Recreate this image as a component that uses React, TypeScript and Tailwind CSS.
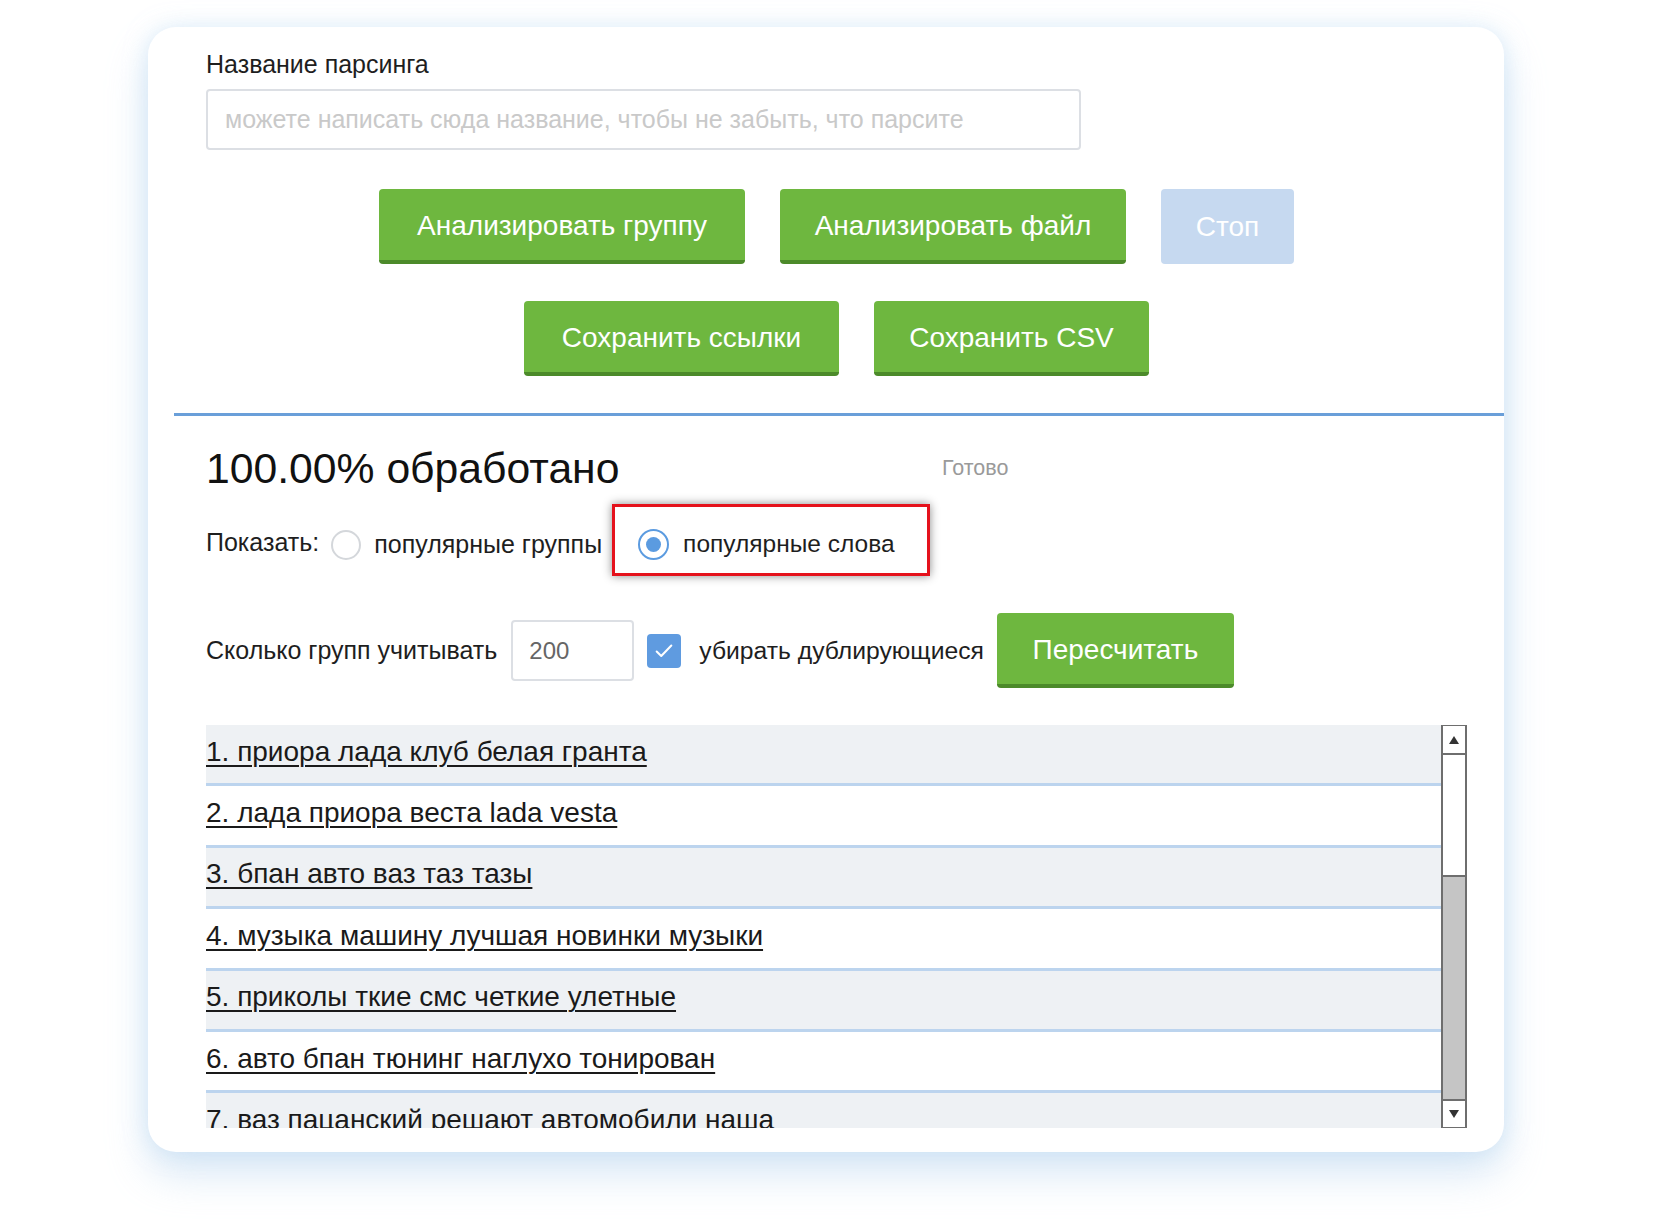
import React from "react";

const rows = [
  "1. приора лада клуб белая гранта",
  "2. лада приора веста lada vesta",
  "3. бпан авто ваз таз тазы",
  "4. музыка машину лучшая новинки музыки",
  "5. приколы ткие смс четкие улетные",
  "6. авто бпан тюнинг наглухо тонирован",
  "7. ваз пацанский решают автомобили наша",
];

function GreenButton({ label, className }: { label: string; className: string }) {
  return (
    <div
      className={
        "h-[75px] flex items-center justify-center rounded-[4px] bg-[#6eb73f] border-b-[4px] border-[#4c8a2a] text-white text-[28px] leading-none pt-[2px] " +
        className
      }
    >
      {label}
    </div>
  );
}

export default function App() {
  return (
    <div
      className="min-h-[1220px] w-[1680px] bg-white pl-[148px] pt-[27px]"
      style={{ fontFamily: '"Liberation Sans", Arial, sans-serif' }}
    >
      <div className="w-[1356px] h-[1125px] rounded-[28px] bg-white shadow-[0_22px_40px_rgba(170,205,235,0.45),0_0_22px_rgba(200,225,245,0.55)] pt-[22px] pl-[58px] pr-[37px] flex flex-col">
        <div className="text-[25px] leading-[30px] text-[#1e1e1e]">Название парсинга</div>
        <div className="mt-[10px] w-[875px] h-[61px] rounded-[4px] border-2 border-[#dcdfe4] flex items-center pl-[17px] text-[25px] text-[#c9c9c9]">
          можете написать сюда название, чтобы не забыть, что парсите
        </div>

        <div className="mt-[39px] flex justify-center gap-[35px]">
          <GreenButton label="Анализировать группу" className="w-[366px]" />
          <GreenButton label="Анализировать файл" className="w-[346px]" />
          <div className="h-[75px] w-[133px] flex items-center justify-center rounded-[4px] bg-[#c6d9f0] text-white text-[28px] leading-none">
            Стоп
          </div>
        </div>
        <div className="mt-[37px] flex justify-center gap-[35px]">
          <GreenButton label="Сохранить ссылки" className="w-[315px]" />
          <GreenButton label="Сохранить CSV" className="w-[275px]" />
        </div>

        <div className="mt-[37px] h-[3px] ml-[-32px] mr-[-37px] bg-[#6a9fd9]" />

        <div className="mt-[27px] h-[50px] flex items-center">
          <div className="text-[42.7px] leading-none text-[#111] w-[736px]">100.00% обработано</div>
          <div className="text-[21.5px] text-[#9a9a9a]">Готово</div>
        </div>

        <div className="mt-[11px] h-[72px] flex items-center text-[25px] text-[#1e1e1e]">
          <div className="flex items-center pt-[9px]">
            <span className="mt-[-4px]">Показать:</span>
            <span className="ml-[12px] w-[30px] h-[30px] rounded-full border-2 border-[#d4d7db] bg-white" />
            <span className="ml-[13px]">популярные группы</span>
          </div>
          <div className="ml-[10px] h-[72px] w-[318px] border-[3px] border-[#e5121c] shadow-[0_0_9px_rgba(0,0,0,0.45)] flex items-center pl-[23px] pt-[9px]">
            <span className="w-[31px] h-[31px] rounded-full border-2 border-[#5b9be0] flex items-center justify-center bg-white">
              <span className="w-[15px] h-[15px] rounded-full bg-[#5b9be0]" />
            </span>
            <span className="ml-[14px] text-[24.5px]">популярные слова</span>
          </div>
        </div>

        <div className="mt-[37px] h-[75px] flex items-center text-[25px] text-[#1e1e1e]">
          <span>Сколько групп учитывать</span>
          <div className="ml-[14px] w-[123px] h-[61px] rounded-[4px] border-2 border-[#dcdfe4] flex items-center pl-[16px] text-[24px] text-[#666]">
            200
          </div>
          <span className="ml-[13px] w-[34px] h-[34px] rounded-[4px] bg-[#5f9be0] flex items-center justify-center">
            <svg width="22" height="22" viewBox="0 0 24 24" fill="none">
              <path d="M4 12.5l5 5L20 6" stroke="white" strokeWidth="2.2" strokeLinecap="round" strokeLinejoin="round" />
            </svg>
          </span>
          <span className="ml-[18px] text-[24.7px]">убирать дублирующиеся</span>
          <GreenButton label="Пересчитать" className="ml-[13px] w-[237px]" />
        </div>

        <div className="mt-[37px] h-[403px] flex overflow-hidden">
          <div className="flex-1 flex flex-col">
            {rows.map((r, i) => (
              <div
                key={i}
                className={
                  "shrink-0 h-[61.4px] border-b-[3px] border-[#bcd4ee] flex items-center pb-[5px] " +
                  (i % 2 === 0 ? "bg-[#eef1f4]" : "bg-white")
                }
              >
                <span className="text-[28px] leading-none text-[#1a1a1a] underline decoration-[2px] underline-offset-[4px]">
                  {r}
                </span>
              </div>
            ))}
          </div>
          <div className="w-[26px] h-[405px] mt-[-1px] border-2 border-[#6e6e6e] flex flex-col bg-white">
            <div className="h-[29px] border-b-2 border-[#6e6e6e] flex items-center justify-center">
              <svg width="12" height="10" viewBox="0 0 12 10">
                <path d="M6 1L11 9H1z" fill="#333" />
              </svg>
            </div>
            <div className="h-[120px] bg-white" />
            <div className="flex-1 bg-[#c5c5c5] border-y-2 border-[#6e6e6e]" />
            <div className="h-[26px] flex items-center justify-center">
              <svg width="12" height="10" viewBox="0 0 12 10">
                <path d="M6 9L11 1H1z" fill="#333" />
              </svg>
            </div>
          </div>
        </div>
      </div>
    </div>
  );
}
